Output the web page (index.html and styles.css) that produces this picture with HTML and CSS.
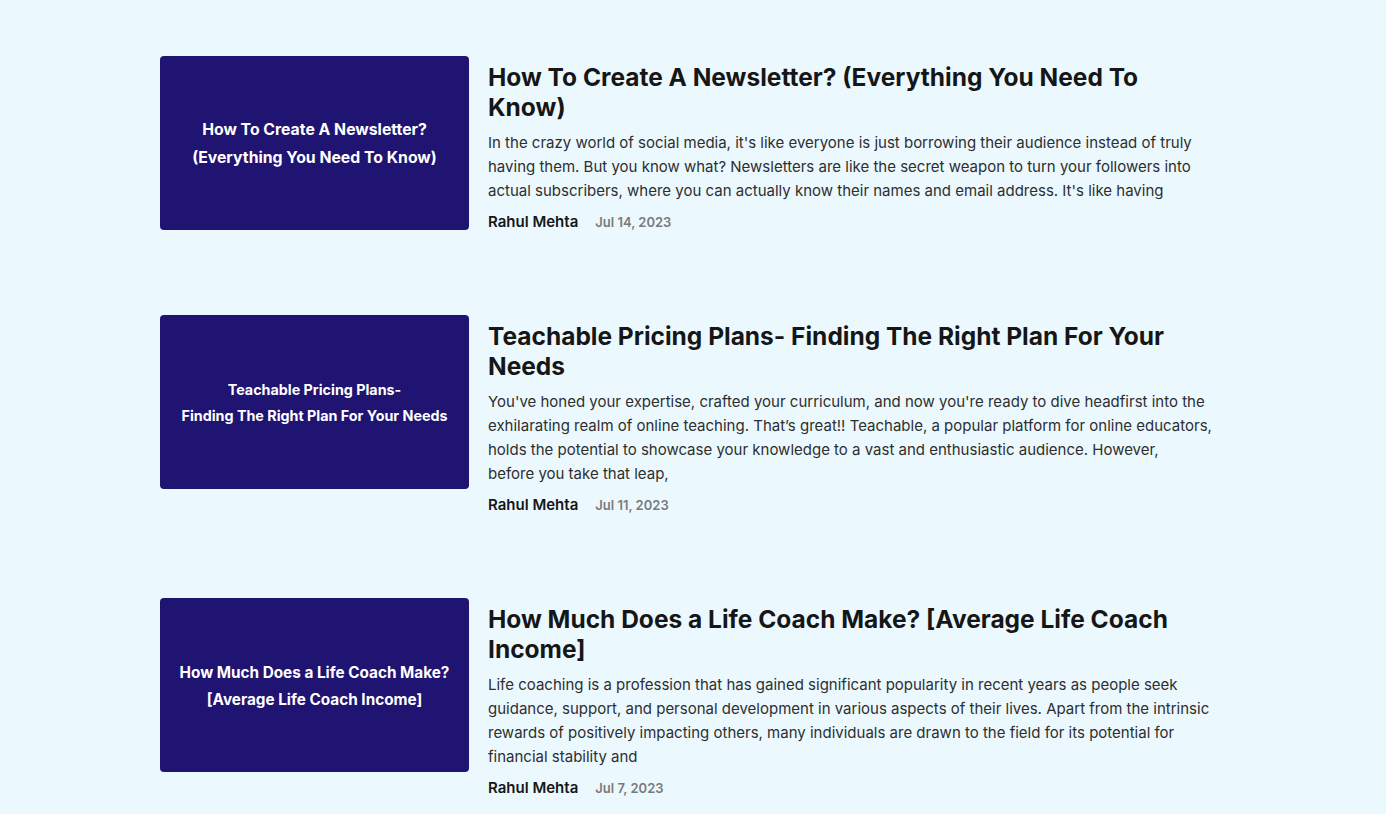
FILE: index.html
```html
<!DOCTYPE html>
<html lang="en">
<head>
<meta charset="utf-8">
<title>Blog</title>
<link rel="stylesheet" href="styles.css">
</head>
<body>
<main class="list">
  <article class="post">
    <div class="thumb thumb-a"><p>How To Create A Newsletter?<br>(Everything You Need To Know)</p></div>
    <div class="body">
      <h2 class="title">How To Create A Newsletter? (Everything You Need To Know)</h2>
      <p class="excerpt">In the crazy world of social media, it's like everyone is just borrowing their audience instead of truly having them. But you know what? Newsletters are like the secret weapon to turn your followers into actual subscribers, where you can actually know their names and email address. It's like having</p>
      <div class="meta"><span class="author">Rahul Mehta</span><span class="date">Jul 14, 2023</span></div>
    </div>
  </article>
  <article class="post">
    <div class="thumb thumb-b"><p>Teachable Pricing Plans-<br>Finding The Right Plan For Your Needs</p></div>
    <div class="body">
      <h2 class="title">Teachable Pricing Plans- Finding The Right Plan For Your Needs</h2>
      <p class="excerpt">You've honed your expertise, crafted your curriculum, and now you're ready to dive headfirst into the exhilarating realm of online teaching. That’s great!! Teachable, a popular platform for online educators, holds the potential to showcase your knowledge to a vast and enthusiastic audience. However, before&nbsp;you take that leap,</p>
      <div class="meta"><span class="author">Rahul Mehta</span><span class="date">Jul 11, 2023</span></div>
    </div>
  </article>
  <article class="post">
    <div class="thumb thumb-c"><p>How Much Does a Life Coach Make?<br>[Average Life Coach Income]</p></div>
    <div class="body">
      <h2 class="title">How Much Does a Life Coach Make? [Average Life Coach Income]</h2>
      <p class="excerpt">Life coaching is a profession that has gained significant popularity in recent years as people seek guidance, support, and personal development in various aspects of their lives. Apart from the intrinsic rewards of positively impacting others, many individuals are drawn to the field for its potential for financial stability and</p>
      <div class="meta"><span class="author">Rahul Mehta</span><span class="date">Jul 7, 2023</span></div>
    </div>
  </article>
</main>
</body>
</html>
```
FILE: styles.css
```css
* { box-sizing: border-box; }
html, body { margin: 0; padding: 0; }
body {
  background: #ebf9ff;
  font-family: Inter, "Noto Sans", sans-serif;
  color: #1a1a1a;
}
.list {
  width: 1066px;
  margin: 0 auto;
  padding-top: 56px;
  display: flex;
  flex-direction: column;
  gap: 82px;
}
.post {
  display: flex;
  align-items: flex-start;
  gap: 19px;
}
.thumb {
  flex: 0 0 309px;
  height: 174px;
  background: #1f1472;
  border-radius: 4px;
  display: flex;
  align-items: center;
  justify-content: center;
  text-align: center;
  color: #ffffff;
  font-weight: 700;
}
.thumb p { margin: 0; }
.thumb-a p { font-size: 15.8px; line-height: 28px; padding-top: 1px; }
.thumb-b p { font-size: 14.3px; line-height: 26px; padding-top: 1px; }
.thumb-c p { font-size: 15.3px; line-height: 27px; padding-top: 1px; }
.body {
  width: 726px;
  padding-top: 6px;
}
.title {
  margin: 0;
  font-size: 24.5px;
  line-height: 30px;
  font-weight: 700;
  color: #161616;
}
.excerpt {
  margin: 9px 0 0;
  font-size: 15px;
  line-height: 24px;
  color: #2e2e2e;
}
.meta {
  margin-top: 8px;
  display: flex;
  align-items: center;
  gap: 17px;
  line-height: 22px;
}
.author {
  font-size: 15px;
  font-weight: 600;
  color: #161616;
}
.date {
  font-size: 13px;
  font-weight: 600;
  color: #7a7a7a;
}
```
